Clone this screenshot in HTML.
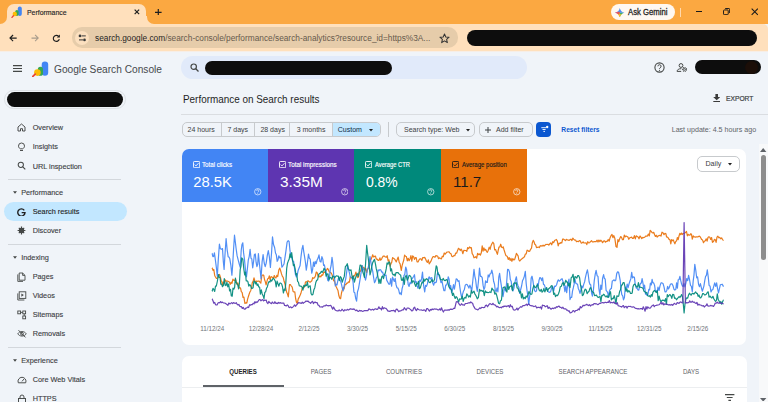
<!DOCTYPE html>
<html><head><meta charset="utf-8">
<style>
*{box-sizing:border-box;margin:0;padding:0}
html,body{width:768px;height:402px;overflow:hidden;background:#F0F4F9;font-family:"Liberation Sans",sans-serif;position:relative}
.a{position:absolute}
.t{white-space:nowrap;line-height:normal}
.blk{background:#0d0d0d}
</style></head><body>
<div class="a" style="left:0;top:0;width:768px;height:24px;background:#FBA841"></div>
<div class="a" style="left:7px;top:3.5px;width:139px;height:21px;background:#FFE0BC;border-radius:7px 7px 0 0"></div>
<div class="a" style="left:0;top:16px;width:8px;height:8px;background:#FFE0BC"></div>
<div class="a" style="left:-2px;top:8px;width:9px;height:16px;background:#FBA841;border-radius:0 0 7px 0"></div>
<div class="a" style="left:146px;top:16px;width:8px;height:8px;background:#FFE0BC"></div>
<div class="a" style="left:146.5px;top:8px;width:9px;height:16px;background:#FBA841;border-radius:0 0 0 7px"></div>
<svg class="a" style="left:11px;top:6px" width="12" height="12" viewBox="0 0 12 12">
<rect x="6.8" y="0.6" width="4" height="9.4" rx="2" fill="#4285F4"/>
<rect x="4.2" y="4" width="3.4" height="6" rx="1.7" fill="#34A853"/>
<circle cx="3.8" cy="8" r="2.2" fill="#FBBC04"/>
<path d="M1 11.4 L2.4 9.8" stroke="#EA4335" stroke-width="1.3" stroke-linecap="round"/>
</svg>
<div class="a t" style="left:26.7px;top:8.01px;font-size:7.6px;color:#262626;transform:scaleX(0.91);transform-origin:0 0;-webkit-text-stroke:0.15px #262626;">Performance</div>
<svg class="a" style="left:134px;top:9.2px" width="5.8" height="5.8" viewBox="0 0 7 7"><path d="M0.8 0.8L6.2 6.2M6.2 0.8L0.8 6.2" stroke="#1f1f1f" stroke-width="1.45"/></svg>
<svg class="a" style="left:155px;top:8.7px" width="6.6" height="6.6" viewBox="0 0 6.6 6.6"><path d="M3.3 0V6.6M0 3.3H6.6" stroke="#1f1f1f" stroke-width="1.2"/></svg>
<div class="a" style="left:611px;top:3.7px;width:64px;height:16.5px;background:#FFF8F1;border-radius:8px"></div>
<svg class="a" style="left:615.3px;top:7.6px" width="9.6" height="9.6" viewBox="0 0 10 10"><clipPath id="gc"><path d="M5 0 Q5.9 4.1 10 5 Q5.9 5.9 5 10 Q4.1 5.9 0 5 Q4.1 4.1 5 0Z"/></clipPath><g clip-path="url(#gc)"><rect x="0" y="0" width="10" height="5" fill="#4C8DF6"/><rect x="0" y="4" width="5" height="6" fill="#EA5A47"/><rect x="5" y="5" width="5" height="5" fill="#3FAE6A"/><rect x="2.5" y="6.5" width="5" height="3.5" fill="#F6C026"/><rect x="0" y="2" width="3" height="4" fill="#D9508B" opacity="0.6"/></g></svg>
<div class="a t" style="left:627.8px;top:7.39px;font-size:8.6px;color:#1f1f1f;transform:scaleX(0.9);transform-origin:0 0;-webkit-text-stroke:0.28px #1f1f1f;">Ask Gemini</div>
<div class="a" style="left:680px;top:7.7px;width:1px;height:9px;background:#FFD9AE"></div>
<div class="a" style="left:695.6px;top:11px;width:6.8px;height:1.1px;background:#1a1a1a"></div>
<svg class="a" style="left:722.8px;top:8.2px" width="7.2" height="7.2" viewBox="0 0 8 8"><rect x="0.6" y="2.2" width="5.2" height="5.2" rx="0.8" fill="none" stroke="#1a1a1a" stroke-width="1.1"/><path d="M2.4 0.6H6.6A0.8 0.8 0 0 1 7.4 1.4V5.6" fill="none" stroke="#1a1a1a" stroke-width="1.1"/></svg>
<svg class="a" style="left:750.5px;top:8.3px" width="7.5" height="7.5" viewBox="0 0 8 8"><path d="M0.7 0.7L7.3 7.3M7.3 0.7L0.7 7.3" stroke="#1a1a1a" stroke-width="1.1"/></svg>
<div class="a" style="left:0;top:23.8px;width:768px;height:28px;background:#FFE0BC;border-radius:0 5px 0 0"></div>
<div class="a" style="left:0;top:51.2px;width:768px;height:1.3px;background:#F7EEE6"></div>
<svg class="a" style="left:9.2px;top:33.8px" width="8.2" height="8.2" viewBox="0 0 10 10"><path d="M9.4 5H1.4M5 1.2L1.2 5L5 8.8" fill="none" stroke="#1f1f1f" stroke-width="1.4"/></svg>
<svg class="a" style="left:30.6px;top:33.8px" width="8.2" height="8.2" viewBox="0 0 10 10"><path d="M0.6 5H8.6M5 1.2L8.8 5L5 8.8" fill="none" stroke="#A89C8C" stroke-width="1.3"/></svg>
<svg class="a" style="left:52.1px;top:34px" width="9" height="9" viewBox="0 0 11 11"><path d="M8.9 6.3A3.7 3.7 0 1 1 8.1 2.9" fill="none" stroke="#1f1f1f" stroke-width="1.4"/><path d="M9.6 0.6V4.3H5.9Z" fill="#1f1f1f"/></svg>
<div class="a" style="left:72.4px;top:27.4px;width:386px;height:20.4px;background:#E6CCAA;border-radius:10px"></div>
<div class="a" style="left:74.8px;top:30.5px;width:14.5px;height:14.5px;border-radius:50%;background:#FCE0BF"></div>
<svg class="a" style="left:78px;top:34px" width="9" height="8" viewBox="0 0 9 8"><circle cx="2" cy="1.9" r="1.35" fill="#3a3a3a"/><path d="M3.6 1.9H7.8M1 5.9H5" stroke="#3a3a3a" stroke-width="1"/><circle cx="6.5" cy="5.9" r="1.35" fill="#3a3a3a"/></svg>
<div class="a t" style="left:94.6px;top:32.18px;font-size:9.7px;color:#1f1f1f;transform:scaleX(0.857);transform-origin:0 0;">search.google.com<span style="color:#665a4d">/search-console/performance/search-analytics?resource_id=ht<span>tps</span>%3A...</span></div>
<svg class="a" style="left:438.5px;top:32.5px" width="11" height="11" viewBox="0 0 12 12"><path d="M6 1L7.4 4.3L11 4.6L8.3 7L9.1 10.5L6 8.6L2.9 10.5L3.7 7L1 4.6L4.6 4.3Z" fill="none" stroke="#333" stroke-width="1.1" stroke-linejoin="round"/></svg>
<div class="a blk" style="left:466.5px;top:30.1px;width:290.5px;height:15.5px;border-radius:8px"></div>
<svg class="a" style="left:13px;top:65px" width="9" height="7" viewBox="0 0 9 7"><path d="M0 0.6H9M0 3.5H9M0 6.4H9" stroke="#444746" stroke-width="1.1"/></svg>
<svg class="a" style="left:32px;top:60.5px" width="17" height="16" viewBox="0 0 17 16">
<rect x="9.7" y="0.6" width="6.5" height="14.2" rx="3.25" fill="#4285F4"/>
<rect x="5.8" y="5.8" width="5.2" height="9" rx="2.6" fill="#34A853"/>
<circle cx="5.4" cy="11.6" r="3.3" fill="#FBBC04"/>
<path d="M0.6 15.6 L3.2 13.2" stroke="#EA4335" stroke-width="1.8" stroke-linecap="round"/>
</svg>
<div class="a t" style="left:53.9px;top:62.14px;font-size:11.7px;color:#474a4d;transform:scaleX(0.87);transform-origin:0 0;">Google Search Console</div>
<div class="a" style="left:181px;top:56.3px;width:346px;height:23px;background:#E1EAFA;border-radius:12px"></div>
<svg class="a" style="left:189.5px;top:63px" width="9" height="9" viewBox="0 0 9 9"><circle cx="3.7" cy="3.7" r="2.7" fill="none" stroke="#444746" stroke-width="1.2"/><path d="M5.8 5.8L8.5 8.5" stroke="#444746" stroke-width="1.3"/></svg>
<div class="a blk" style="left:205px;top:60.5px;width:187px;height:14.5px;border-radius:7px"></div>
<svg class="a" style="left:653.8px;top:61.75px" width="11" height="11" viewBox="0 0 11 11"><circle cx="5.5" cy="5.5" r="4.6" fill="none" stroke="#444746" stroke-width="1.1"/><path d="M3.9 4.3A1.6 1.6 0 1 1 6.1 5.8C5.6 6.1 5.5 6.4 5.5 7" fill="none" stroke="#444746" stroke-width="0.95"/><circle cx="5.5" cy="8.3" r="0.6" fill="#444746"/></svg>
<svg class="a" style="left:676px;top:62px" width="12" height="11" viewBox="0 0 12 11"><circle cx="5" cy="3.5" r="1.9" fill="none" stroke="#444746" stroke-width="1"/><path d="M1.1 9.4C1.1 7.6 2.8 6.6 5.4 6.7M1.1 9.4H5.2" fill="none" stroke="#444746" stroke-width="1"/><circle cx="8.6" cy="7.4" r="1.9" fill="none" stroke="#444746" stroke-width="1.1" stroke-dasharray="1 0.6"/><circle cx="8.6" cy="7.4" r="0.9" fill="none" stroke="#444746" stroke-width="0.8"/></svg>
<div class="a blk" style="left:694.8px;top:59.5px;width:66.2px;height:14.8px;border-radius:7.4px"></div><div class="a" style="left:745px;top:60.5px;width:13px;height:13px;border-radius:50%;background:#1b0e08"></div>
<div class="a" style="left:4.2px;top:90.2px;width:122px;height:18.7px;border-radius:9.4px;border:1px solid #DDE1E6"></div>
<div class="a blk" style="left:6.8px;top:92px;width:116.4px;height:14.8px;border-radius:7.4px"></div>
<div class="a" style="left:7.8px;top:178.9px;width:113.5px;height:1px;background:#D3D7DC"></div>
<svg class="a" style="left:12.6px;top:190.9px" width="4" height="3" viewBox="0 0 4 3"><path d="M0 0.3H4L2 2.7Z" fill="#444746"/></svg>
<div class="a t" style="left:21.2px;top:188.28px;font-size:7.3px;color:#3c4043;-webkit-text-stroke:0.12px #3c4043;">Performance</div>
<div class="a" style="left:7.8px;top:243.8px;width:113.5px;height:1px;background:#D3D7DC"></div>
<svg class="a" style="left:12.6px;top:255.5px" width="4" height="3" viewBox="0 0 4 3"><path d="M0 0.3H4L2 2.7Z" fill="#444746"/></svg>
<div class="a t" style="left:21.2px;top:252.88px;font-size:7.3px;color:#3c4043;-webkit-text-stroke:0.12px #3c4043;">Indexing</div>
<div class="a" style="left:7.8px;top:346.9px;width:113.5px;height:1px;background:#D3D7DC"></div>
<svg class="a" style="left:12.6px;top:358.9px" width="4" height="3" viewBox="0 0 4 3"><path d="M0 0.3H4L2 2.7Z" fill="#444746"/></svg>
<div class="a t" style="left:21.2px;top:356.28px;font-size:7.3px;color:#3c4043;-webkit-text-stroke:0.12px #3c4043;">Experience</div>
<div class="a" style="left:3.8px;top:202px;width:123px;height:19.2px;background:#C2E7FF;border-radius:10px"></div>
<svg class="a" style="left:17px;top:122.9px" width="10" height="10" viewBox="0 0 10 10"><path d="M1 4L4.5 1L8 4V8H5.5V5.7H3.5V8H1Z" fill="none" stroke="#444746" stroke-width="0.95"/></svg>
<div class="a t" style="left:32.7px;top:123.18px;font-size:7.3px;color:#3c4043;-webkit-text-stroke:0.12px #3c4043;">Overview</div>
<svg class="a" style="left:17px;top:141.9px" width="10" height="10" viewBox="0 0 10 10"><path d="M3 8.5H6M3.2 6.8C2 6 1.5 5 1.5 4A3 3 0 0 1 7.5 4C7.5 5 7 6 5.8 6.8Z" fill="none" stroke="#444746" stroke-width="0.95"/></svg>
<div class="a t" style="left:32.7px;top:142.18px;font-size:7.3px;color:#3c4043;-webkit-text-stroke:0.12px #3c4043;">Insights</div>
<svg class="a" style="left:17px;top:161.3px" width="10" height="10" viewBox="0 0 10 10"><circle cx="3.8" cy="3.8" r="2.6" fill="none" stroke="#444746" stroke-width="1.05"/><path d="M5.8 5.8L8.3 8.3" stroke="#444746" stroke-width="1.15"/></svg>
<div class="a t" style="left:32.7px;top:161.58px;font-size:7.3px;color:#3c4043;-webkit-text-stroke:0.12px #3c4043;">URL inspection</div>
<div class="a t" style="left:32.7px;top:207.48px;font-size:7.3px;color:#1f1f1f;-webkit-text-stroke:0.12px #1f1f1f;">Search results</div>
<svg class="a" style="left:17px;top:225.6px" width="10" height="10" viewBox="0 0 10 10"><path d="M4.5 0.6V8.4M0.6 4.5H8.4M1.8 1.8L7.2 7.2M7.2 1.8L1.8 7.2" stroke="#444746" stroke-width="1.2"/><circle cx="4.5" cy="4.5" r="2.7" fill="#444746"/></svg>
<div class="a t" style="left:32.7px;top:225.88px;font-size:7.3px;color:#3c4043;-webkit-text-stroke:0.12px #3c4043;">Discover</div>
<svg class="a" style="left:17px;top:271.9px" width="10" height="10" viewBox="0 0 10 10"><path d="M2.2 1H5.6L8 3.4V8.2H2.2Z M5.6 1V3.4H8 M0.8 2.4V9.4H6" fill="none" stroke="#444746" stroke-width="0.9"/></svg>
<div class="a t" style="left:32.7px;top:272.18px;font-size:7.3px;color:#3c4043;-webkit-text-stroke:0.12px #3c4043;">Pages</div>
<svg class="a" style="left:17px;top:291.0px" width="10" height="10" viewBox="0 0 10 10"><rect x="2.2" y="0.8" width="6.6" height="6.6" fill="none" stroke="#444746" stroke-width="0.9"/><path d="M0.8 2.4V9H7.4" fill="none" stroke="#444746" stroke-width="0.9"/><path d="M4.4 2.5L6.8 4.1L4.4 5.7Z" fill="#444746"/></svg>
<div class="a t" style="left:32.7px;top:291.28px;font-size:7.3px;color:#3c4043;-webkit-text-stroke:0.12px #3c4043;">Videos</div>
<svg class="a" style="left:17px;top:310.1px" width="10" height="10" viewBox="0 0 10 10"><rect x="0.8" y="1" width="2.8" height="2.8" fill="none" stroke="#444746" stroke-width="0.9"/><rect x="5.8" y="1" width="2.8" height="2.8" fill="none" stroke="#444746" stroke-width="0.9"/><rect x="5.8" y="6" width="2.8" height="2.8" fill="none" stroke="#444746" stroke-width="0.9"/><path d="M3.6 2.4H5.8M7.2 3.8V6" stroke="#444746" stroke-width="0.9"/></svg>
<div class="a t" style="left:32.7px;top:310.38px;font-size:7.3px;color:#3c4043;-webkit-text-stroke:0.12px #3c4043;">Sitemaps</div>
<svg class="a" style="left:17px;top:329.2px" width="10" height="10" viewBox="0 0 10 10"><path d="M0.8 4.8C2.5 1.8 7.5 1.8 9.2 4.8C7.5 7.8 2.5 7.8 0.8 4.8Z" fill="none" stroke="#444746" stroke-width="0.9"/><circle cx="5" cy="4.8" r="1.4" fill="none" stroke="#444746" stroke-width="0.9"/><path d="M1.5 1.2L8.5 8.4" stroke="#444746" stroke-width="0.95"/></svg>
<div class="a t" style="left:32.7px;top:329.48px;font-size:7.3px;color:#3c4043;-webkit-text-stroke:0.12px #3c4043;">Removals</div>
<svg class="a" style="left:17px;top:375.0px" width="10" height="10" viewBox="0 0 10 10"><path d="M1.3 7.8A4 4 0 1 1 8.7 7.8Z" fill="none" stroke="#444746" stroke-width="0.95"/><path d="M5 6.4L7 4" stroke="#444746" stroke-width="0.95"/></svg>
<div class="a t" style="left:32.7px;top:375.28px;font-size:7.3px;color:#3c4043;-webkit-text-stroke:0.12px #3c4043;">Core Web Vitals</div>
<svg class="a" style="left:17px;top:394.1px" width="10" height="10" viewBox="0 0 10 10"><rect x="1.5" y="4.5" width="7" height="5" fill="none" stroke="#444746" stroke-width="0.95"/><path d="M3 4.5V3A2 2 0 0 1 7 3V4.5" fill="none" stroke="#444746" stroke-width="0.95"/></svg>
<div class="a t" style="left:32.7px;top:394.38px;font-size:7.3px;color:#3c4043;-webkit-text-stroke:0.12px #3c4043;">HTTPS</div>
<svg class="a" style="left:16.8px;top:207.6px" width="8.8" height="8.8" viewBox="0 0 10 10"><path d="M8.3 2.6A4.1 4.1 0 1 0 9.1 5.3H5.3" fill="none" stroke="#1f1f1f" stroke-width="1.55"/></svg>
<div class="a t" style="left:183.4px;top:93.52px;font-size:10.3px;color:#1f1f1f;transform:scaleX(0.962);transform-origin:0 0;">Performance on Search results</div>
<svg class="a" style="left:713px;top:94.3px" width="7.4" height="8" viewBox="0 0 7.4 8"><path d="M2.4 0H5V3H7.2L3.7 6.2L0.2 3H2.4Z" fill="#3a3a3a"/><rect x="0.3" y="7" width="6.8" height="1" fill="#3a3a3a"/></svg>
<div class="a t" style="left:726.2px;top:94.28px;font-size:7.2px;color:#3c4043;transform:scaleX(0.93);transform-origin:0 0;-webkit-text-stroke:0.2px #3c4043;">EXPORT</div>
<div class="a" style="left:181px;top:113.6px;width:587px;height:1px;background:#DADDE1"></div>
<div class="a" style="left:181.6px;top:122.2px;width:199px;height:15.2px;border:1px solid #C7CACD;border-radius:5px;overflow:hidden"><div class="a" style="left:150px;top:0;width:50px;height:16px;background:#C2E7FF"></div></div>
<div class="a" style="left:221.0px;top:122.6px;width:1px;height:14.5px;background:#C7CACD"></div>
<div class="a" style="left:253.7px;top:122.6px;width:1px;height:14.5px;background:#C7CACD"></div>
<div class="a" style="left:289.0px;top:122.6px;width:1px;height:14.5px;background:#C7CACD"></div>
<div class="a" style="left:332.1px;top:122.6px;width:1px;height:14.5px;background:#C7CACD"></div>
<div class="a t" style="left:187.6px;top:125.76px;font-size:7.0px;color:#3c4043;">24 hours</div>
<div class="a t" style="left:227.5px;top:125.76px;font-size:7.0px;color:#3c4043;">7 days</div>
<div class="a t" style="left:260.4px;top:125.76px;font-size:7.0px;color:#3c4043;">28 days</div>
<div class="a t" style="left:296.7px;top:125.76px;font-size:7.0px;color:#3c4043;">3 months</div>
<div class="a t" style="left:337.8px;top:125.76px;font-size:7.0px;color:#0b2a44;">Custom</div>
<svg class="a" style="left:368.8px;top:129px" width="4" height="2.5" viewBox="0 0 4 2.5"><path d="M0 0H4L2 2.5Z" fill="#1f1f1f"/></svg>
<div class="a" style="left:388.4px;top:122px;width:1px;height:14.8px;background:#C7CACD"></div>
<div class="a" style="left:396.3px;top:122.2px;width:79.2px;height:15.2px;border:1px solid #C7CACD;border-radius:5px"></div>
<div class="a t" style="left:404.0px;top:125.76px;font-size:7.0px;color:#3c4043;">Search type: Web</div>
<svg class="a" style="left:466px;top:129px" width="4" height="2.5" viewBox="0 0 4 2.5"><path d="M0 0H4L2 2.5Z" fill="#1f1f1f"/></svg>
<div class="a" style="left:479.4px;top:122.2px;width:53.6px;height:15.2px;border:1px solid #C7CACD;border-radius:5px"></div>
<svg class="a" style="left:484.8px;top:126.6px" width="6" height="6" viewBox="0 0 6 6"><path d="M3 0V6M0 3H6" stroke="#3c4043" stroke-width="1"/></svg>
<div class="a t" style="left:496.0px;top:125.86px;font-size:7.0px;color:#3c4043;">Add filter</div>
<div class="a" style="left:536.3px;top:121.9px;width:15.2px;height:15.2px;background:#0B57D0;border-radius:4px"></div>
<svg class="a" style="left:539.5px;top:125px" width="9" height="9" viewBox="0 0 9 9"><path d="M1.3 2.7H6.2M2.5 4.5H5.6M3.4 6.4H5" stroke="#fff" stroke-width="0.9"/><circle cx="7.2" cy="2" r="1.2" fill="#fff"/></svg>
<div class="a t" style="left:561.3px;top:126.34px;font-size:6.7px;color:#0B57D0;font-weight:bold;">Reset filters</div>
<div class="a t" style="left:671.7px;top:125.67px;font-size:7.1px;color:#5f6368;">Last update: 4.5 hours ago</div>
<div class="a" style="left:181.6px;top:148.5px;width:564.2px;height:196px;background:#fff;border-radius:7px"></div>
<div class="a" style="left:181.5px;top:148.5px;width:86.3px;height:53.3px;background:#4285F4;border-radius:7px 0 0 0;"></div>
<svg class="a" style="left:192.5px;top:161px" width="7.2" height="7.2" viewBox="0 0 7.2 7.2"><rect x="0.5" y="0.5" width="6.2" height="6.2" rx="0.8" fill="none" stroke="#fff" stroke-width="0.9"/><path d="M1.7 3.6L3 4.9L5.5 2.2" fill="none" stroke="#fff" stroke-width="0.9"/></svg>
<div class="a t" style="left:202.1px;top:161.15px;font-size:6.9px;color:#fff;transform:scaleX(0.9);transform-origin:0 0;-webkit-text-stroke:0.15px #fff;">Total clicks</div>
<div class="a t" style="left:193.2px;top:173.58px;font-size:14.8px;color:#fff;">28.5K</div>
<svg class="a" style="left:254.2px;top:188.4px" width="7.5" height="7.5" viewBox="0 0 8 8"><circle cx="4" cy="4" r="3.4" fill="none" stroke="rgba(255,255,255,0.85)" stroke-width="0.8"/><path d="M2.9 3.1A1.1 1.1 0 1 1 4.4 4C4.1 4.2 4 4.4 4 4.8" fill="none" stroke="rgba(255,255,255,0.85)" stroke-width="0.8"/><circle cx="4" cy="5.9" r="0.45" fill="rgba(255,255,255,0.85)"/></svg>
<div class="a" style="left:267.8px;top:148.5px;width:86.4px;height:53.3px;background:#5E35B1;"></div>
<svg class="a" style="left:278.8px;top:161px" width="7.2" height="7.2" viewBox="0 0 7.2 7.2"><rect x="0.5" y="0.5" width="6.2" height="6.2" rx="0.8" fill="none" stroke="#fff" stroke-width="0.9"/><path d="M1.7 3.6L3 4.9L5.5 2.2" fill="none" stroke="#fff" stroke-width="0.9"/></svg>
<div class="a t" style="left:288.4px;top:161.15px;font-size:6.9px;color:#fff;transform:scaleX(0.915);transform-origin:0 0;-webkit-text-stroke:0.15px #fff;">Total impressions</div>
<div class="a t" style="left:279.5px;top:173.58px;font-size:14.8px;color:#fff;transform:scaleX(1.04);transform-origin:0 0;">3.35M</div>
<svg class="a" style="left:340.6px;top:188.4px" width="7.5" height="7.5" viewBox="0 0 8 8"><circle cx="4" cy="4" r="3.4" fill="none" stroke="rgba(255,255,255,0.85)" stroke-width="0.8"/><path d="M2.9 3.1A1.1 1.1 0 1 1 4.4 4C4.1 4.2 4 4.4 4 4.8" fill="none" stroke="rgba(255,255,255,0.85)" stroke-width="0.8"/><circle cx="4" cy="5.9" r="0.45" fill="rgba(255,255,255,0.85)"/></svg>
<div class="a" style="left:354.2px;top:148.5px;width:86.7px;height:53.3px;background:#00897B;"></div>
<svg class="a" style="left:365.2px;top:161px" width="7.2" height="7.2" viewBox="0 0 7.2 7.2"><rect x="0.5" y="0.5" width="6.2" height="6.2" rx="0.8" fill="none" stroke="#fff" stroke-width="0.9"/><path d="M1.7 3.6L3 4.9L5.5 2.2" fill="none" stroke="#fff" stroke-width="0.9"/></svg>
<div class="a t" style="left:374.8px;top:161.15px;font-size:6.9px;color:#fff;transform:scaleX(0.84);transform-origin:0 0;-webkit-text-stroke:0.15px #fff;">Average CTR</div>
<div class="a t" style="left:365.9px;top:173.58px;font-size:14.8px;color:#fff;transform:scaleX(0.94);transform-origin:0 0;">0.8%</div>
<svg class="a" style="left:427.3px;top:188.4px" width="7.5" height="7.5" viewBox="0 0 8 8"><circle cx="4" cy="4" r="3.4" fill="none" stroke="rgba(255,255,255,0.85)" stroke-width="0.8"/><path d="M2.9 3.1A1.1 1.1 0 1 1 4.4 4C4.1 4.2 4 4.4 4 4.8" fill="none" stroke="rgba(255,255,255,0.85)" stroke-width="0.8"/><circle cx="4" cy="5.9" r="0.45" fill="rgba(255,255,255,0.85)"/></svg>
<div class="a" style="left:440.9px;top:148.5px;width:86.1px;height:53.3px;background:#E8710A;"></div>
<svg class="a" style="left:451.9px;top:161px" width="7.2" height="7.2" viewBox="0 0 7.2 7.2"><rect x="0.5" y="0.5" width="6.2" height="6.2" rx="0.8" fill="none" stroke="#1a1a1a" stroke-width="0.9"/><path d="M1.7 3.6L3 4.9L5.5 2.2" fill="none" stroke="#1a1a1a" stroke-width="0.9"/></svg>
<div class="a t" style="left:461.5px;top:161.15px;font-size:6.9px;color:#1a1a1a;transform:scaleX(0.875);transform-origin:0 0;-webkit-text-stroke:0.15px #1a1a1a;">Average position</div>
<div class="a t" style="left:452.6px;top:173.58px;font-size:14.8px;color:#1a1a1a;transform:scaleX(1.02);transform-origin:0 0;">11.7</div>
<svg class="a" style="left:513.4px;top:188.4px" width="7.5" height="7.5" viewBox="0 0 8 8"><circle cx="4" cy="4" r="3.4" fill="none" stroke="rgba(255,255,255,0.85)" stroke-width="0.8"/><path d="M2.9 3.1A1.1 1.1 0 1 1 4.4 4C4.1 4.2 4 4.4 4 4.8" fill="none" stroke="rgba(255,255,255,0.85)" stroke-width="0.8"/><circle cx="4" cy="5.9" r="0.45" fill="rgba(255,255,255,0.85)"/></svg>
<div class="a" style="left:697.1px;top:156.4px;width:42.6px;height:15.9px;border:1px solid #C7CACD;border-radius:5px"></div>
<div class="a t" style="left:705.5px;top:160.37px;font-size:7.1px;color:#3c4043;">Daily</div>
<svg class="a" style="left:728px;top:163.4px" width="4" height="2.5" viewBox="0 0 4 2.5"><path d="M0 0H4L2 2.5Z" fill="#1f1f1f"/></svg>
<svg class="a" style="left:0;top:0" width="768" height="402" viewBox="0 0 768 402"><g fill="none" stroke-width="1.2" stroke-linejoin="round" stroke-opacity="0.92">
<path d="M212.0 267.9 L212.1 267.9 L213.0 270.4 L213.8 269.5 L214.7 275.4 L215.5 277.0 L216.3 278.3 L217.1 278.4 L217.9 277.3 L218.7 274.9 L219.5 274.4 L220.3 276.8 L221.1 280.2 L221.9 281.8 L222.7 285.4 L223.5 282.0 L224.4 282.9 L225.2 279.8 L226.1 281.1 L226.9 281.1 L227.8 281.2 L228.6 281.5 L229.5 282.2 L230.3 284.3 L231.2 282.2 L232.0 283.3 L232.9 279.2 L233.7 280.3 L234.6 280.6 L235.4 279.2 L236.2 281.7 L237.1 284.3 L237.9 282.9 L238.8 286.4 L239.6 288.0 L240.5 287.9 L241.3 291.7 L242.2 292.6 L243.0 297.3 L243.9 297.2 L244.9 303.4 L246.0 302.7 L246.8 303.1 L247.6 299.2 L248.4 296.5 L249.2 294.0 L249.9 292.0 L250.7 290.7 L251.5 287.8 L252.3 282.7 L253.2 281.1 L254.0 277.8 L254.9 281.0 L255.7 282.1 L256.6 281.0 L257.4 281.3 L258.3 281.1 L259.1 281.0 L259.9 282.2 L260.8 283.2 L261.9 275.5 L262.9 274.9 L263.7 275.2 L264.5 279.5 L265.3 281.6 L266.1 284.8 L266.9 281.6 L267.7 278.7 L268.5 278.4 L269.3 275.9 L270.1 279.8 L271.0 276.7 L271.8 276.8 L272.6 277.6 L273.5 278.0 L274.3 275.5 L275.2 277.4 L276.0 277.9 L276.9 275.3 L277.7 276.6 L278.8 270.1 L279.8 268.1 L280.7 271.0 L281.5 273.9 L282.4 276.4 L283.2 277.4 L284.1 281.3 L284.9 283.7 L285.8 288.1 L286.6 292.1 L287.5 294.0 L288.3 296.9 L289.5 284.7 L290.4 284.6 L291.3 286.0 L292.2 287.2 L293.1 291.5 L293.9 292.0 L294.8 291.8 L295.6 298.5 L296.5 302.3 L297.3 303.3 L298.2 299.1 L299.1 297.4 L300.0 295.6 L300.9 293.3 L301.8 289.9 L302.7 287.2 L303.6 288.0 L304.6 286.5 L305.5 281.9 L306.4 282.0 L307.4 281.1 L308.3 280.9 L309.2 281.8 L310.1 282.2 L311.0 281.5 L311.8 280.8 L312.7 277.6 L313.6 278.3 L314.5 277.8 L315.4 276.0 L316.3 272.0 L317.2 272.8 L318.1 276.1 L319.0 277.0 L319.9 275.9 L320.8 276.9 L321.8 274.8 L322.7 275.3 L323.7 272.2 L324.6 272.4 L325.6 271.5 L326.5 270.2 L327.5 268.4 L328.4 269.7 L329.3 272.0 L330.2 272.3 L331.1 272.9 L332.0 274.5 L332.8 277.6 L333.7 280.8 L334.5 280.7 L335.3 284.3 L336.2 286.8 L337.1 288.7 L338.0 290.6 L338.9 295.8 L339.8 298.3 L340.6 298.7 L341.5 293.0 L342.3 290.1 L343.2 287.4 L344.1 288.9 L345.0 284.3 L345.9 284.7 L346.7 283.2 L347.6 283.1 L348.5 281.8 L349.4 282.2 L350.3 276.8 L351.2 277.8 L352.1 277.5 L353.1 275.9 L354.0 276.2 L355.0 274.9 L355.9 272.1 L356.9 276.3 L357.9 277.6 L358.8 276.1 L359.7 271.3 L360.5 271.3 L361.3 268.1 L362.2 265.9 L363.1 267.6 L364.0 267.5 L364.9 269.9 L365.8 268.6 L366.7 272.7 L367.5 269.4 L368.3 268.3 L369.2 264.9 L370.0 260.6 L370.9 259.7 L371.8 257.6 L372.7 254.8 L373.6 257.0 L374.5 256.4 L375.4 256.0 L376.3 259.2 L377.2 259.1 L378.1 260.4 L379.0 260.3 L379.9 257.9 L380.7 260.2 L381.6 259.1 L382.5 257.1 L383.4 256.0 L384.5 256.1 L385.4 257.0 L386.3 257.3 L387.2 255.7 L388.1 260.8 L388.9 259.8 L390.1 266.2 L390.9 263.7 L391.7 262.4 L392.6 257.6 L393.4 258.2 L394.4 258.9 L395.3 260.1 L396.3 261.9 L397.3 259.3 L398.2 257.1 L399.2 262.5 L400.1 263.9 L401.3 270.5 L402.1 265.7 L402.9 262.9 L403.8 260.0 L404.6 255.2 L405.5 256.2 L406.4 256.6 L407.3 260.9 L408.2 258.3 L409.1 260.7 L410.0 259.0 L410.9 255.6 L411.8 261.2 L412.7 255.9 L413.6 256.7 L414.5 259.4 L415.3 257.7 L416.2 257.7 L417.1 262.0 L418.0 262.0 L419.0 259.9 L419.9 258.8 L420.9 258.9 L421.9 260.3 L422.8 257.5 L423.8 257.7 L424.7 257.4 L425.6 259.1 L426.5 261.3 L427.4 262.3 L428.3 259.9 L429.2 263.8 L430.2 262.4 L431.1 260.9 L432.1 258.3 L433.1 256.5 L434.0 256.7 L435.0 257.3 L435.9 255.6 L436.8 255.8 L437.7 256.2 L438.6 258.7 L439.5 257.8 L440.4 258.5 L441.4 258.9 L442.3 256.2 L443.3 256.7 L444.2 253.0 L445.2 254.2 L446.2 252.9 L447.1 252.0 L448.1 252.0 L449.0 251.7 L450.0 253.3 L450.9 253.6 L451.9 256.4 L452.9 256.6 L453.8 255.6 L454.8 255.7 L455.7 253.0 L456.6 253.2 L457.6 250.4 L458.5 248.3 L459.4 249.1 L460.3 250.5 L461.1 249.1 L461.9 250.3 L462.8 253.7 L463.9 250.3 L465.0 250.5 L465.9 250.5 L466.8 251.3 L467.7 247.5 L468.6 248.7 L469.5 247.0 L470.4 247.8 L471.3 247.6 L472.2 253.7 L473.1 255.0 L474.0 257.8 L474.9 257.4 L475.8 256.7 L476.7 258.2 L477.6 253.3 L478.6 254.7 L479.5 253.9 L480.4 255.0 L481.3 252.8 L482.2 245.8 L483.1 251.2 L483.9 247.9 L484.8 250.3 L485.6 249.3 L486.5 251.3 L487.3 252.3 L488.2 250.4 L489.2 247.1 L490.1 249.4 L491.0 245.7 L492.0 243.5 L492.9 242.2 L493.8 243.6 L494.7 249.8 L495.6 249.5 L496.5 252.1 L497.4 254.3 L498.2 250.4 L499.0 247.0 L499.9 246.8 L500.7 244.2 L501.6 247.2 L502.4 247.7 L503.2 246.8 L504.1 250.0 L504.9 252.6 L505.8 255.4 L506.6 255.9 L507.4 256.7 L508.3 259.5 L509.2 257.6 L510.1 260.4 L511.0 258.4 L511.9 261.3 L512.8 258.6 L513.7 259.9 L514.6 259.6 L515.5 256.8 L516.4 253.4 L517.2 254.6 L518.1 255.9 L518.9 260.0 L519.7 261.0 L520.7 259.9 L521.6 259.0 L522.5 258.5 L523.5 257.3 L524.4 257.0 L525.3 254.1 L526.2 253.9 L527.1 250.2 L528.0 250.6 L528.9 251.5 L529.8 251.1 L530.6 249.3 L531.5 248.1 L532.3 242.9 L533.2 240.4 L534.0 241.7 L534.8 244.3 L535.7 245.0 L536.5 247.6 L537.5 247.3 L538.4 247.1 L539.3 247.6 L540.2 245.9 L541.2 245.7 L542.1 246.2 L543.1 245.1 L544.0 246.2 L545.0 245.2 L545.9 244.4 L546.9 244.5 L547.9 244.3 L548.8 245.1 L549.8 243.8 L550.7 243.0 L551.7 244.8 L552.7 241.7 L553.6 242.7 L554.6 240.6 L555.5 240.1 L556.4 239.5 L557.3 241.1 L558.2 245.8 L559.1 243.2 L560.0 243.5 L560.9 242.5 L561.8 242.9 L562.7 239.0 L563.6 239.2 L564.5 239.8 L565.4 240.7 L566.3 239.3 L567.2 239.9 L568.1 240.0 L569.0 240.5 L570.0 239.6 L570.9 239.2 L571.9 240.6 L572.8 238.1 L573.7 239.2 L574.7 240.1 L575.6 240.0 L576.5 241.7 L577.5 241.3 L578.4 241.7 L579.3 240.6 L580.3 240.9 L581.2 243.1 L582.1 242.9 L583.1 241.9 L584.0 243.0 L584.9 243.0 L585.9 242.8 L586.8 244.6 L587.7 241.7 L588.7 243.0 L589.6 242.7 L590.5 241.6 L591.5 240.7 L592.4 242.0 L593.3 241.8 L594.3 241.7 L595.2 241.6 L596.1 241.6 L597.1 240.2 L598.0 242.0 L598.9 240.0 L599.9 241.6 L600.8 240.2 L601.7 241.1 L602.6 242.7 L603.6 241.1 L604.5 240.8 L605.4 242.2 L606.4 241.3 L607.3 241.3 L608.2 239.5 L609.2 241.2 L610.1 237.7 L611.0 235.7 L612.0 234.5 L612.9 237.7 L613.8 235.6 L614.8 238.2 L616.0 246.6 L617.0 247.4 L617.9 239.5 L618.8 241.7 L619.8 238.4 L620.7 236.5 L621.6 237.6 L622.5 239.7 L623.4 239.6 L624.3 235.0 L625.2 236.9 L626.1 236.0 L627.0 236.5 L627.9 237.1 L628.8 239.3 L629.7 237.9 L630.6 237.5 L631.6 237.1 L632.5 238.4 L633.4 238.4 L634.4 235.6 L635.3 238.8 L636.2 235.8 L637.2 236.4 L638.1 237.0 L639.0 238.8 L640.0 236.0 L640.9 237.1 L641.8 238.6 L642.8 237.4 L643.7 237.6 L644.6 237.3 L645.6 236.2 L646.5 236.1 L647.4 236.1 L648.4 234.0 L649.3 235.9 L650.2 230.3 L651.2 231.4 L652.1 232.6 L652.9 232.9 L653.7 232.3 L654.6 234.7 L655.4 236.5 L656.2 235.2 L657.1 237.1 L658.0 236.0 L659.0 235.6 L660.0 235.3 L661.0 236.1 L662.0 232.2 L663.0 232.7 L664.0 234.6 L665.0 233.4 L665.8 233.5 L666.6 237.0 L667.5 237.2 L668.3 238.0 L669.1 239.4 L670.0 239.7 L670.8 243.8 L671.6 239.7 L672.4 240.7 L673.3 239.9 L674.1 242.0 L674.9 243.8 L675.8 241.4 L676.6 240.8 L677.4 237.5 L678.2 239.6 L679.1 235.7 L679.9 233.3 L680.7 234.7 L681.6 233.1 L682.4 234.5 L683.2 233.5 L684.0 233.3 L684.9 233.0 L685.7 232.3 L686.5 231.5 L687.4 235.8 L688.2 234.3 L689.0 235.2 L689.9 235.1 L690.7 233.7 L691.5 234.3 L692.3 239.1 L693.2 235.8 L694.0 237.0 L694.8 236.9 L695.7 237.1 L696.5 236.8 L697.3 236.8 L698.1 236.9 L699.0 236.1 L699.8 236.3 L700.7 237.8 L701.7 239.6 L702.6 240.1 L703.5 242.7 L704.4 241.2 L705.3 240.7 L706.2 238.8 L707.1 241.1 L708.0 237.5 L708.9 236.8 L709.8 237.2 L710.7 239.5 L711.6 237.6 L712.5 242.3 L713.5 241.6 L714.4 239.4 L715.3 239.8 L716.1 242.4 L717.0 237.2 L717.9 236.2 L718.8 237.8 L719.7 237.4 L720.6 238.8 L721.6 237.8 L722.5 239.6 L723.4 240.4 L723.6 240.4" stroke="#E8710A"/>
<path d="M212.0 253.4 L212.1 253.4 L212.9 256.7 L213.6 256.4 L214.4 252.8 L215.4 260.1 L216.3 267.0 L217.3 276.3 L218.3 259.4 L219.4 244.2 L220.4 248.8 L221.5 249.3 L222.5 248.6 L223.3 261.1 L224.1 269.4 L225.1 252.7 L226.1 238.7 L227.2 250.1 L228.2 256.8 L229.0 257.1 L229.8 258.8 L230.8 264.8 L231.9 275.2 L232.7 264.6 L233.6 248.8 L234.5 235.2 L235.3 241.8 L236.2 249.3 L237.1 255.7 L238.1 259.6 L239.2 263.9 L240.2 267.3 L241.2 250.5 L242.0 244.4 L242.8 242.8 L243.6 252.9 L244.4 258.8 L245.4 269.1 L246.5 276.8 L247.4 268.7 L248.3 260.0 L249.2 256.6 L250.1 249.4 L251.0 258.3 L251.8 258.9 L252.7 267.8 L253.6 261.5 L254.4 254.5 L255.3 254.0 L256.1 262.2 L256.9 266.6 L257.7 264.3 L258.4 253.7 L259.3 262.7 L260.2 270.5 L261.0 278.8 L262.1 261.9 L263.1 254.5 L264.2 263.0 L265.2 266.6 L266.2 263.1 L267.3 255.3 L268.3 250.5 L269.4 257.2 L270.4 267.4 L271.5 253.6 L272.5 236.8 L273.5 244.5 L274.6 247.5 L275.5 253.0 L276.3 254.7 L277.2 261.3 L278.0 259.9 L278.8 255.8 L279.8 257.9 L280.8 257.3 L281.9 267.1 L282.9 265.8 L284.0 264.0 L285.0 257.4 L286.0 250.7 L287.1 242.1 L288.2 240.7 L289.1 241.5 L290.0 250.7 L290.8 256.5 L291.7 256.9 L292.6 261.0 L293.6 261.3 L294.5 268.2 L295.4 274.2 L296.4 277.0 L297.3 274.6 L298.2 270.2 L299.2 267.7 L300.1 265.5 L301.0 256.6 L302.0 249.1 L302.9 245.4 L303.7 251.3 L304.6 256.8 L305.4 262.0 L306.3 270.1 L307.4 262.8 L308.5 254.0 L309.3 258.1 L310.2 259.2 L311.0 266.5 L311.8 273.2 L312.7 268.8 L313.5 262.1 L314.4 266.4 L315.2 261.4 L316.2 263.7 L317.1 260.0 L318.1 258.1 L319.0 254.9 L320.0 261.4 L321.0 262.0 L321.9 256.6 L322.8 259.1 L323.6 265.4 L324.4 264.9 L325.3 269.5 L326.1 271.8 L326.9 275.9 L327.8 280.5 L328.6 281.0 L329.5 277.6 L330.3 269.0 L331.1 265.7 L332.0 257.4 L332.8 263.0 L333.7 274.9 L334.5 277.7 L335.3 286.0 L336.2 284.3 L337.0 284.9 L337.9 280.4 L338.7 277.5 L339.6 279.4 L340.5 280.8 L341.4 283.9 L342.3 288.1 L343.2 290.9 L344.1 286.2 L345.0 282.0 L345.9 278.0 L346.7 271.8 L347.6 265.5 L348.5 269.6 L349.4 272.6 L350.3 277.1 L351.2 277.6 L352.1 278.0 L353.0 281.3 L353.9 292.1 L354.8 292.8 L355.7 298.3 L356.6 301.1 L357.5 291.8 L358.5 288.6 L359.4 283.4 L360.3 277.8 L361.2 271.8 L362.2 265.5 L363.0 269.6 L363.9 268.6 L364.7 276.7 L365.5 280.1 L366.4 276.2 L367.3 269.8 L368.2 267.8 L369.1 262.8 L370.0 256.6 L370.9 262.3 L371.8 267.3 L372.7 271.2 L373.6 277.5 L374.5 282.6 L375.4 281.2 L376.3 277.8 L377.2 276.7 L378.1 269.9 L379.0 270.7 L379.9 269.5 L380.8 270.0 L381.7 272.1 L382.6 272.0 L383.5 275.2 L384.4 274.6 L385.3 275.3 L386.0 275.0 L386.7 280.1 L387.8 282.2 L388.9 284.2 L389.8 284.1 L390.7 278.5 L391.6 286.2 L392.5 277.1 L393.4 279.2 L394.3 281.5 L395.2 278.4 L396.1 284.9 L397.0 287.7 L397.9 288.1 L398.7 289.9 L399.6 293.8 L400.4 293.0 L401.3 294.7 L402.1 288.7 L403.0 285.3 L403.9 275.7 L404.8 274.4 L405.7 267.0 L406.6 269.7 L407.4 277.5 L408.2 284.5 L409.1 286.4 L410.0 282.6 L410.9 283.7 L411.8 278.8 L412.7 278.0 L413.6 276.5 L414.5 274.7 L415.3 282.3 L416.2 281.7 L417.1 285.9 L418.0 288.3 L418.9 283.4 L419.8 280.2 L420.7 281.4 L421.6 278.7 L422.5 272.0 L423.6 285.3 L424.7 291.8 L425.6 285.4 L426.5 286.3 L427.4 283.9 L428.3 278.8 L429.2 276.8 L430.1 279.3 L431.0 277.7 L431.9 277.9 L432.8 283.2 L433.7 285.2 L434.6 282.0 L435.5 282.7 L436.4 282.0 L437.3 273.9 L438.2 272.7 L439.1 276.0 L440.1 278.7 L441.0 282.6 L442.0 281.1 L443.0 286.4 L443.9 290.6 L444.9 290.7 L445.7 285.2 L446.6 285.0 L447.4 282.5 L448.2 276.8 L449.1 279.2 L449.9 288.9 L450.7 285.5 L451.6 292.6 L452.5 289.8 L453.5 284.7 L454.4 289.1 L455.3 284.0 L456.2 278.9 L457.2 279.3 L458.1 281.5 L459.0 280.7 L459.9 287.6 L460.8 293.5 L461.7 297.3 L462.6 294.2 L463.4 291.3 L464.3 289.8 L465.2 285.4 L466.1 284.4 L467.1 284.5 L468.0 286.1 L468.9 288.1 L469.9 285.1 L470.8 287.5 L471.7 291.5 L472.8 280.8 L474.0 269.4 L474.8 276.1 L475.6 279.5 L476.5 287.1 L477.3 291.4 L478.4 281.8 L479.5 268.1 L480.4 276.3 L481.3 276.4 L482.2 277.6 L483.1 285.4 L483.9 289.5 L484.8 287.4 L485.6 280.8 L486.5 282.3 L487.3 282.5 L488.2 274.9 L489.1 276.9 L490.0 273.8 L490.9 273.7 L491.8 270.1 L492.7 273.8 L493.6 281.3 L494.5 284.0 L495.4 291.2 L496.3 291.4 L497.1 288.0 L497.9 291.9 L498.8 277.1 L499.6 273.3 L500.4 279.7 L501.3 285.3 L502.1 292.8 L503.0 296.7 L503.9 290.8 L504.8 288.2 L505.8 291.1 L506.7 281.8 L507.6 269.4 L508.6 269.6 L509.5 272.1 L510.3 279.5 L511.2 281.4 L512.1 289.5 L513.0 290.9 L513.9 288.4 L514.7 283.7 L515.5 279.7 L516.4 276.8 L517.2 283.1 L518.1 285.9 L518.9 287.5 L519.7 293.5 L520.7 289.5 L521.6 286.0 L522.5 280.8 L523.5 278.8 L524.4 276.1 L525.3 271.3 L526.2 283.6 L527.0 290.5 L527.9 295.6 L528.7 304.4 L529.5 297.5 L530.4 291.0 L531.2 277.9 L532.0 276.2 L532.9 280.6 L533.8 287.0 L534.7 290.8 L535.6 291.7 L536.5 290.9 L537.4 283.5 L538.2 286.0 L539.0 280.4 L539.9 277.5 L540.8 278.0 L541.7 280.6 L542.6 277.8 L543.5 284.5 L544.4 284.9 L545.2 287.4 L546.1 289.3 L547.0 289.1 L547.9 291.4 L548.8 292.1 L549.8 292.4 L550.7 291.3 L551.7 287.7 L552.7 286.6 L553.6 291.3 L554.6 286.2 L555.5 286.4 L556.5 285.0 L557.4 281.8 L558.3 279.8 L559.3 281.2 L560.2 280.3 L561.1 279.3 L562.1 278.7 L563.0 281.7 L563.9 285.1 L564.9 291.6 L565.8 285.8 L566.7 292.6 L567.8 283.8 L569.0 279.1 L570.0 299.6 L570.8 297.4 L571.7 297.3 L572.5 291.2 L573.3 287.9 L574.1 284.2 L575.0 279.4 L575.8 283.2 L576.6 283.8 L577.5 284.0 L578.3 288.4 L579.1 290.2 L580.0 293.4 L580.9 289.8 L581.8 285.9 L582.7 288.0 L583.7 284.4 L584.6 281.9 L585.5 277.1 L586.5 272.9 L587.4 269.8 L588.2 274.3 L589.1 281.7 L589.9 284.3 L590.7 284.8 L591.6 293.0 L592.4 296.1 L593.3 291.1 L594.3 280.3 L595.2 274.4 L596.1 270.4 L597.1 275.7 L598.0 276.4 L598.9 288.6 L599.9 294.9 L600.8 285.1 L601.7 289.4 L602.6 278.1 L603.6 274.7 L604.4 278.6 L605.2 279.1 L606.1 290.3 L606.9 291.3 L607.7 292.6 L608.6 297.3 L609.5 290.7 L610.4 289.1 L611.4 288.4 L612.3 280.9 L613.2 280.4 L614.1 279.8 L615.0 280.8 L615.8 280.0 L616.7 273.6 L617.6 271.9 L618.5 272.0 L619.3 275.6 L620.2 280.3 L621.0 289.0 L621.8 294.7 L622.7 295.8 L623.5 299.9 L624.4 297.6 L625.3 287.0 L626.3 288.9 L627.2 284.1 L628.1 287.6 L629.0 284.0 L629.9 281.3 L630.8 278.9 L631.7 272.4 L632.5 277.8 L633.4 276.9 L634.4 277.4 L635.3 284.7 L636.2 287.9 L637.2 288.5 L638.0 290.1 L638.8 290.1 L639.7 285.8 L640.5 283.4 L641.3 283.2 L642.1 278.6 L643.0 283.3 L643.8 288.6 L644.6 285.2 L645.5 294.2 L646.3 294.0 L647.1 295.4 L647.9 294.5 L648.8 289.4 L649.6 289.9 L650.4 283.1 L651.3 284.9 L652.1 279.4 L652.9 282.9 L653.7 282.9 L654.6 285.4 L655.4 291.4 L656.2 290.9 L657.1 292.2 L658.0 287.1 L659.0 290.5 L660.0 285.9 L661.0 282.9 L662.0 282.9 L663.0 283.5 L664.0 286.8 L665.0 291.8 L665.9 291.8 L666.8 290.5 L667.6 286.3 L668.5 289.0 L669.4 287.3 L670.3 284.4 L671.2 283.8 L672.1 283.9 L673.1 286.1 L674.0 289.3 L674.9 290.1 L675.8 289.4 L676.6 282.9 L677.4 288.2 L678.2 279.9 L679.1 279.5 L679.9 276.3 L680.7 280.4 L681.6 284.1 L682.4 285.9 L683.2 286.4 L684.0 283.3 L684.9 286.8 L685.8 283.6 L686.7 278.6 L687.7 280.7 L688.6 275.4 L689.5 279.5 L690.5 285.4 L691.4 286.3 L692.3 291.7 L693.2 280.9 L694.0 274.8 L694.8 264.4 L695.8 270.5 L696.7 277.8 L697.6 277.0 L698.6 284.6 L699.5 286.7 L700.4 283.6 L701.4 287.8 L702.3 291.2 L703.1 288.7 L703.9 286.1 L704.8 280.3 L705.6 276.4 L706.4 275.4 L707.3 269.8 L708.2 276.6 L709.1 285.4 L710.1 286.3 L711.0 292.0 L711.9 290.1 L712.9 289.4 L713.8 286.2 L714.7 282.8 L715.7 286.3 L716.6 282.9 L717.5 288.3 L718.5 292.8 L719.4 288.8 L720.3 284.9 L721.3 284.5 L722.2 284.2 L723.4 286.4 L723.6 286.4" stroke="#4285F4"/>
<path d="M212.0 291.2 L212.1 291.2 L213.0 288.4 L213.8 289.4 L214.7 291.5 L215.5 286.1 L216.3 286.2 L217.4 281.0 L218.5 274.5 L219.3 277.4 L220.1 277.7 L220.8 284.1 L221.6 284.0 L222.5 286.7 L223.4 285.5 L224.3 278.7 L225.2 285.3 L226.0 285.6 L226.9 282.2 L227.8 286.9 L228.7 284.0 L229.6 291.0 L230.5 289.3 L231.3 296.0 L232.2 296.1 L233.0 288.1 L233.8 289.2 L234.6 287.6 L235.4 278.1 L236.2 282.6 L237.0 283.7 L237.8 285.2 L238.6 288.8 L239.4 283.5 L240.2 269.6 L241.0 266.2 L241.7 257.8 L242.8 259.1 L243.9 269.6 L244.7 274.9 L245.4 272.0 L246.2 280.8 L247.0 280.8 L247.9 281.6 L248.8 286.1 L249.7 284.6 L250.6 285.7 L251.4 288.4 L252.3 288.3 L253.1 287.7 L253.9 281.4 L254.7 281.1 L255.5 283.9 L256.3 282.3 L257.1 285.4 L257.9 284.1 L258.7 287.0 L259.6 287.0 L260.4 294.1 L261.3 289.8 L262.2 293.9 L263.1 295.7 L264.0 298.8 L264.8 292.4 L265.7 291.7 L266.5 288.3 L267.4 286.7 L268.2 283.3 L269.1 281.5 L270.0 282.0 L270.8 279.8 L271.7 281.1 L272.6 279.2 L273.5 278.1 L274.4 279.5 L275.3 281.2 L276.2 286.9 L277.1 281.1 L278.0 283.8 L278.9 286.2 L279.8 283.1 L280.7 283.1 L281.6 283.9 L282.5 286.8 L283.4 293.0 L284.3 289.1 L285.1 290.4 L285.9 281.6 L286.7 268.3 L287.5 263.2 L288.3 261.1 L289.2 259.0 L290.0 253.8 L290.9 257.7 L291.7 252.7 L292.6 260.1 L293.4 265.7 L294.2 264.4 L295.1 268.7 L295.9 274.7 L296.7 273.6 L297.6 281.4 L298.4 282.1 L299.3 285.8 L300.2 286.1 L301.1 286.2 L302.0 287.1 L302.9 290.1 L303.8 285.4 L304.7 286.6 L305.6 284.9 L306.5 285.6 L307.4 282.0 L308.3 287.6 L309.2 286.2 L310.2 285.8 L311.1 293.6 L312.0 295.0 L313.0 294.2 L313.9 289.7 L314.8 287.7 L315.8 282.5 L316.7 280.3 L317.6 279.9 L318.6 274.6 L319.5 273.5 L320.4 273.1 L321.4 271.3 L322.3 272.3 L323.2 270.9 L324.1 268.3 L325.1 270.2 L326.1 276.2 L327.0 274.0 L328.0 273.9 L328.9 279.8 L329.9 277.3 L330.9 277.7 L331.8 279.3 L332.7 276.0 L333.7 276.3 L334.6 277.9 L335.5 276.6 L336.5 275.8 L337.4 276.2 L338.4 276.2 L339.3 280.7 L340.3 276.6 L341.2 277.7 L342.2 282.2 L343.2 279.3 L344.3 276.4 L345.4 266.5 L346.3 265.8 L347.3 263.7 L348.2 268.7 L349.1 269.7 L350.1 270.4 L351.0 269.8 L351.8 274.8 L352.7 279.0 L353.5 276.2 L354.4 282.2 L355.3 278.9 L356.3 275.3 L357.2 273.5 L358.2 276.5 L359.1 271.7 L360.1 265.0 L361.1 265.3 L361.9 268.4 L362.7 271.5 L363.6 274.4 L364.4 277.4 L365.5 264.7 L366.7 245.4 L367.5 252.6 L368.3 258.7 L369.2 265.9 L370.0 274.9 L370.9 271.7 L371.8 266.4 L372.7 262.6 L373.6 260.9 L374.5 259.4 L375.4 263.7 L376.3 268.9 L377.2 272.6 L378.1 277.8 L379.0 283.4 L379.9 279.2 L380.8 283.5 L381.7 277.0 L382.6 276.0 L383.5 278.6 L384.4 274.8 L385.3 273.1 L386.2 268.9 L387.1 262.9 L388.0 264.2 L388.9 261.9 L389.8 262.5 L390.6 271.0 L391.5 268.8 L392.3 273.5 L393.2 275.0 L394.2 274.2 L395.1 276.0 L396.0 272.6 L397.0 272.7 L397.9 272.5 L398.8 273.6 L399.7 274.4 L400.6 274.9 L401.5 280.1 L402.4 280.3 L403.3 277.5 L404.3 284.5 L405.2 277.0 L406.2 275.3 L407.2 280.2 L408.1 278.7 L409.1 275.4 L410.0 275.7 L411.0 277.0 L412.0 283.0 L412.9 280.8 L413.9 281.3 L414.8 284.1 L415.8 286.5 L416.7 283.3 L417.6 283.9 L418.5 281.3 L419.4 288.7 L420.3 287.9 L421.2 284.9 L422.1 282.0 L423.0 282.9 L423.8 278.9 L424.7 281.2 L425.6 279.4 L426.5 278.7 L427.4 279.5 L428.3 280.1 L429.2 282.4 L430.1 282.6 L431.0 281.5 L431.9 279.4 L432.8 281.7 L433.7 280.8 L434.5 279.7 L435.4 271.8 L436.2 265.8 L437.0 267.1 L437.9 274.3 L438.7 274.3 L439.6 275.5 L440.4 279.5 L441.4 279.7 L442.3 280.2 L443.3 278.4 L444.2 280.2 L445.2 280.7 L446.2 279.7 L447.1 279.9 L448.0 282.9 L448.9 286.8 L449.8 287.8 L450.7 288.9 L451.6 290.3 L452.5 295.5 L453.4 293.2 L454.3 296.3 L455.2 298.5 L456.1 296.6 L457.0 297.5 L457.9 299.9 L458.7 301.9 L459.6 298.9 L460.5 299.2 L461.4 299.0 L462.3 296.0 L463.2 301.4 L464.1 298.4 L465.0 297.3 L465.9 298.1 L466.8 293.9 L467.7 295.1 L468.6 297.1 L469.5 295.8 L470.4 297.0 L471.3 290.5 L472.2 293.2 L473.1 292.1 L474.0 291.2 L474.8 293.8 L475.6 295.0 L476.5 296.8 L477.3 298.8 L478.4 297.3 L479.5 289.3 L480.4 290.9 L481.4 290.4 L482.4 291.4 L483.3 290.5 L484.3 295.7 L485.2 290.9 L486.2 292.4 L487.1 292.2 L488.1 292.7 L489.1 292.3 L490.0 291.9 L491.0 292.5 L491.9 288.1 L492.9 289.9 L493.9 290.1 L494.8 294.2 L495.8 292.8 L496.7 295.3 L497.7 299.4 L498.6 303.3 L499.6 303.8 L500.5 300.7 L501.4 300.3 L502.3 291.7 L503.2 287.4 L504.1 287.3 L505.0 286.9 L505.9 289.5 L506.9 292.1 L507.8 283.4 L508.7 289.5 L509.7 286.8 L510.6 286.3 L511.5 285.5 L512.5 290.6 L513.4 284.1 L514.3 282.8 L515.3 283.3 L516.2 282.7 L517.1 287.9 L518.0 288.3 L518.8 290.9 L519.7 292.5 L520.6 291.7 L521.5 297.9 L522.4 293.8 L523.3 299.0 L524.2 297.4 L525.2 298.7 L526.1 296.0 L527.1 297.0 L528.1 294.7 L529.0 291.4 L530.0 293.5 L530.9 294.4 L531.9 294.0 L532.8 288.9 L533.8 285.4 L534.8 287.2 L535.7 287.6 L536.7 285.8 L537.6 284.7 L538.5 288.2 L539.4 290.4 L540.3 291.2 L541.2 289.3 L542.1 292.2 L543.0 291.2 L543.9 288.4 L544.8 291.9 L545.7 289.7 L546.6 287.5 L547.5 291.4 L548.4 289.0 L549.3 288.2 L550.2 287.5 L551.1 286.1 L552.0 285.6 L552.9 289.0 L553.7 294.5 L554.6 293.1 L555.5 296.6 L556.5 295.2 L557.5 295.6 L558.4 294.0 L559.4 291.1 L560.3 286.7 L561.3 286.4 L562.2 283.7 L563.1 282.5 L564.0 285.5 L564.9 283.0 L565.8 280.2 L566.7 282.1 L567.5 282.2 L568.4 285.9 L569.2 283.2 L570.0 287.6 L571.2 277.8 L572.1 277.0 L573.1 274.3 L574.0 282.2 L575.0 276.6 L575.9 277.1 L576.8 278.1 L577.8 275.5 L578.7 275.7 L579.6 277.7 L580.6 285.7 L581.5 289.4 L582.4 295.6 L583.4 294.7 L584.3 291.3 L585.2 289.1 L586.2 290.0 L587.1 293.7 L588.0 292.2 L589.0 291.3 L589.9 288.3 L590.8 287.6 L591.8 290.9 L592.7 292.2 L593.6 292.3 L594.6 295.6 L595.5 295.4 L596.4 295.1 L597.4 296.8 L598.3 297.5 L599.1 297.0 L600.0 296.4 L600.9 301.6 L601.8 295.3 L602.7 295.6 L603.6 294.2 L604.5 294.9 L605.3 296.5 L606.2 297.0 L607.1 295.7 L607.9 297.4 L608.8 296.7 L609.7 293.1 L610.5 291.7 L611.4 300.0 L612.3 298.4 L613.2 298.7 L614.2 295.6 L615.1 299.0 L616.0 303.8 L616.9 295.9 L617.8 296.3 L618.7 296.1 L619.6 291.6 L620.5 289.8 L621.4 285.3 L622.2 284.9 L623.2 282.6 L624.1 282.7 L625.0 287.0 L626.0 291.4 L626.9 288.8 L627.8 292.1 L628.8 290.7 L629.7 291.5 L630.5 293.5 L631.4 293.5 L632.2 292.9 L633.0 286.7 L633.8 284.7 L634.7 284.1 L635.6 285.2 L636.5 286.9 L637.5 287.2 L638.4 282.7 L639.3 287.2 L640.3 287.1 L641.2 287.5 L642.1 287.6 L643.1 288.6 L644.0 291.2 L644.9 291.7 L645.9 293.2 L646.8 292.3 L647.7 295.8 L648.7 296.2 L649.6 295.7 L650.4 297.1 L651.3 294.6 L652.1 296.3 L652.9 292.3 L653.7 291.2 L654.6 290.3 L655.5 291.8 L656.4 292.5 L657.3 290.5 L658.2 300.7 L659.1 296.1 L660.0 299.8 L661.0 301.8 L662.0 300.4 L662.9 300.2 L663.8 300.3 L664.7 301.1 L665.6 298.6 L666.4 304.5 L667.3 294.6 L668.2 296.6 L669.1 295.2 L670.0 294.6 L670.9 295.8 L671.8 298.4 L672.7 294.4 L673.7 294.5 L674.6 298.3 L675.5 298.0 L676.5 299.8 L677.4 298.5 L678.2 297.7 L679.1 296.5 L679.9 297.5 L680.7 296.4 L681.6 294.5 L682.4 296.4 L683.3 304.0 L684.1 313.0 L685.0 303.9 L685.9 299.1 L686.8 297.9 L687.7 298.1 L688.6 294.9 L689.5 293.2 L690.3 294.4 L691.2 295.2 L692.1 293.4 L693.0 293.3 L693.9 294.2 L694.8 292.9 L695.7 292.0 L696.5 293.4 L697.3 293.4 L698.1 296.3 L699.0 295.0 L699.8 297.4 L700.7 297.9 L701.7 296.4 L702.6 293.7 L703.5 293.5 L704.5 294.8 L705.4 294.8 L706.3 294.3 L707.3 292.5 L708.2 291.8 L709.1 297.1 L710.1 296.1 L711.0 297.4 L711.9 298.0 L712.9 296.3 L713.8 298.7 L714.7 300.3 L715.6 301.3 L716.5 300.2 L717.3 293.8 L718.2 299.5 L719.1 301.0 L720.0 303.1 L720.8 301.5 L721.7 304.2 L722.6 301.7 L723.4 300.1 L723.6 300.1" stroke="#00897B"/>
<path d="M212.0 298.9 L212.1 298.9 L213.0 300.8 L213.8 303.2 L214.7 302.4 L215.5 304.6 L216.3 305.0 L217.2 304.8 L218.0 303.0 L218.9 302.5 L219.7 302.8 L220.6 301.6 L221.5 302.7 L222.4 302.1 L223.3 302.9 L224.2 303.0 L225.1 303.2 L226.0 303.8 L226.9 304.4 L227.9 305.4 L228.8 303.0 L229.8 303.9 L230.7 303.4 L231.6 302.6 L232.6 303.5 L233.5 302.6 L234.5 303.1 L235.4 303.4 L236.3 302.7 L237.1 304.3 L238.0 305.0 L238.9 304.4 L239.7 306.3 L240.6 306.7 L241.5 306.7 L242.3 308.5 L243.2 307.4 L244.1 309.0 L244.9 309.3 L245.8 308.1 L246.8 307.9 L247.7 307.0 L248.6 307.5 L249.6 304.7 L250.5 305.2 L251.4 304.5 L252.3 304.6 L253.2 303.2 L254.1 303.9 L254.9 301.6 L255.8 302.8 L256.7 301.9 L257.5 302.1 L258.4 300.7 L259.3 299.5 L260.1 299.6 L261.0 300.8 L261.9 299.9 L262.7 299.7 L263.6 300.9 L264.4 300.1 L265.3 300.3 L266.2 300.0 L267.0 302.6 L267.9 303.5 L268.8 301.4 L269.6 302.6 L270.5 303.1 L271.4 303.7 L272.3 302.0 L273.1 303.0 L274.0 303.4 L274.9 301.7 L275.8 303.3 L276.7 303.1 L277.5 303.6 L278.4 302.5 L279.3 303.2 L280.2 302.6 L281.1 303.2 L282.0 303.0 L282.8 303.2 L283.7 303.0 L284.6 305.5 L285.5 305.6 L286.4 305.9 L287.3 304.9 L288.2 305.7 L289.1 307.6 L289.9 307.3 L290.8 306.9 L291.7 307.8 L292.7 307.2 L293.6 306.3 L294.6 304.9 L295.5 306.3 L296.5 305.0 L297.5 303.8 L298.4 302.7 L299.4 302.8 L300.3 302.9 L301.3 303.5 L302.3 302.2 L303.2 303.3 L304.2 302.4 L305.1 301.9 L306.0 301.0 L307.0 301.4 L307.9 301.0 L308.8 302.0 L309.7 302.4 L310.6 303.4 L311.5 302.1 L312.5 301.3 L313.4 303.6 L314.3 302.3 L315.2 302.1 L316.1 302.7 L317.1 302.5 L318.0 305.0 L318.9 305.4 L319.9 306.8 L320.8 307.0 L321.7 306.9 L322.6 307.2 L323.5 306.0 L324.4 305.7 L325.3 306.0 L326.2 304.8 L327.1 305.7 L328.0 305.5 L328.8 305.9 L329.7 305.5 L330.7 305.3 L331.7 307.1 L332.6 309.2 L333.6 307.0 L334.5 308.9 L335.5 310.3 L336.5 310.6 L337.4 310.8 L338.3 310.9 L339.2 309.9 L340.1 310.8 L341.1 310.7 L342.0 309.2 L342.9 310.2 L343.8 311.1 L344.7 309.7 L345.7 310.2 L346.6 310.2 L347.5 309.3 L348.4 310.1 L349.4 309.5 L350.3 308.7 L351.2 309.2 L352.1 309.2 L353.0 309.4 L354.0 308.9 L354.9 309.8 L355.8 310.7 L356.8 310.0 L357.7 311.2 L358.6 311.4 L359.6 310.3 L360.5 311.0 L361.4 310.6 L362.4 311.4 L363.3 311.1 L364.2 310.7 L365.2 310.7 L366.1 310.5 L367.0 310.7 L368.0 310.6 L368.9 308.8 L369.8 309.2 L370.8 309.9 L371.7 309.8 L372.6 309.3 L373.6 310.1 L374.5 309.3 L375.4 308.8 L376.2 309.1 L377.1 309.5 L378.0 308.8 L378.9 306.8 L379.7 308.4 L380.6 308.3 L381.5 309.9 L382.4 306.7 L383.2 308.9 L384.1 307.8 L385.0 308.1 L386.0 308.4 L387.0 309.6 L388.0 311.1 L388.9 311.2 L389.8 311.4 L390.7 310.9 L391.6 310.7 L392.5 310.7 L393.4 310.4 L394.3 310.6 L395.2 311.9 L396.1 309.4 L397.0 309.0 L397.9 310.4 L398.8 311.5 L399.7 310.9 L400.6 310.9 L401.5 310.5 L402.4 309.8 L403.3 309.9 L404.3 307.7 L405.2 309.0 L406.2 310.0 L407.2 308.0 L408.1 308.0 L409.1 308.4 L410.0 309.1 L410.9 309.8 L411.9 311.0 L412.8 310.5 L413.7 308.0 L414.7 307.2 L415.6 309.7 L416.5 310.5 L417.5 308.6 L418.4 309.5 L419.3 309.8 L420.3 310.0 L421.2 309.9 L422.1 310.2 L423.0 310.5 L424.0 309.8 L424.9 310.3 L425.8 311.3 L426.7 308.7 L427.6 308.5 L428.6 310.0 L429.5 311.1 L430.4 309.5 L431.3 310.1 L432.2 309.0 L433.2 309.7 L434.1 308.8 L435.0 309.2 L435.9 309.1 L436.9 309.2 L437.8 309.9 L438.7 310.0 L439.7 308.8 L440.6 310.2 L441.5 307.8 L442.5 310.5 L443.4 312.0 L444.3 310.2 L445.2 310.2 L446.2 310.0 L447.1 310.3 L448.1 309.7 L449.0 310.3 L450.0 309.4 L450.9 309.1 L451.9 309.4 L452.9 309.1 L453.8 308.3 L454.7 308.5 L455.5 305.2 L456.3 301.9 L457.2 301.5 L458.0 302.2 L458.9 303.6 L459.7 305.0 L460.5 305.3 L461.5 303.7 L462.5 304.9 L463.4 304.9 L464.4 305.3 L465.3 303.5 L466.3 303.5 L467.2 303.5 L468.1 303.0 L469.0 302.7 L469.9 303.0 L470.8 301.9 L471.7 302.8 L472.6 303.3 L473.4 305.7 L474.2 307.1 L475.1 308.7 L476.0 309.1 L477.0 309.4 L477.9 309.9 L478.9 308.9 L479.8 307.8 L480.8 308.5 L481.7 307.3 L482.7 307.5 L483.6 307.6 L484.6 307.4 L485.5 305.5 L486.5 305.1 L487.5 306.8 L488.4 305.4 L489.3 304.1 L490.2 303.6 L491.1 304.3 L492.0 304.6 L492.9 303.3 L493.9 304.6 L494.8 304.8 L495.8 305.7 L496.7 306.9 L497.7 306.3 L498.6 307.3 L499.6 307.7 L500.5 307.3 L501.4 307.8 L502.3 306.5 L503.2 307.0 L504.1 306.0 L505.0 306.4 L505.9 305.9 L506.8 306.7 L507.7 305.8 L508.6 305.6 L509.5 307.3 L510.4 304.7 L511.4 306.7 L512.3 306.3 L513.2 309.3 L514.1 310.2 L515.1 310.0 L516.0 309.5 L516.9 308.1 L517.9 310.0 L518.8 308.4 L519.7 307.7 L520.7 306.7 L521.7 307.2 L522.6 305.9 L523.6 305.5 L524.5 305.6 L525.5 305.0 L526.5 304.1 L527.3 305.5 L528.2 304.0 L529.1 304.1 L530.0 305.5 L530.9 305.6 L531.9 305.9 L532.8 305.9 L533.8 306.6 L534.8 306.3 L535.7 305.9 L536.7 307.9 L537.6 307.4 L538.6 307.3 L539.6 307.7 L540.5 306.9 L541.5 309.1 L542.4 305.1 L543.4 305.5 L544.4 305.6 L545.3 306.8 L546.3 306.3 L547.2 305.7 L548.2 308.5 L549.1 307.2 L550.1 308.3 L551.1 309.2 L552.0 308.4 L552.9 308.2 L553.7 308.6 L554.6 307.8 L555.5 308.1 L556.4 306.7 L557.3 307.2 L558.2 306.4 L559.1 306.2 L560.0 307.3 L561.0 307.4 L561.9 308.3 L562.9 307.2 L563.8 308.6 L564.8 308.9 L565.8 308.8 L566.7 310.2 L567.5 310.1 L568.4 311.1 L569.2 310.8 L570.0 312.9 L570.9 312.6 L571.9 312.2 L572.8 310.8 L573.7 310.7 L574.7 312.0 L575.6 310.5 L576.5 310.5 L577.5 310.1 L578.4 308.9 L579.3 309.9 L580.3 306.5 L581.2 307.8 L582.1 306.9 L583.1 305.2 L584.0 305.9 L584.9 305.2 L585.8 305.0 L586.7 304.3 L587.6 305.1 L588.5 305.6 L589.4 304.7 L590.4 306.0 L591.3 305.0 L592.2 304.7 L593.1 304.9 L594.0 303.7 L594.9 303.6 L595.8 303.9 L596.7 303.9 L597.6 304.6 L598.5 304.4 L599.4 303.4 L600.3 303.4 L601.2 302.8 L602.1 302.7 L603.0 302.5 L603.9 303.1 L604.8 302.4 L605.7 302.4 L606.6 302.7 L607.5 302.2 L608.4 302.4 L609.3 300.5 L610.3 303.0 L611.2 302.3 L612.1 302.7 L613.0 302.8 L613.9 301.8 L614.8 303.4 L615.6 303.3 L616.4 304.0 L617.3 302.7 L618.1 305.6 L618.9 306.0 L619.8 306.2 L620.7 306.5 L621.6 307.1 L622.5 306.1 L623.4 305.6 L624.3 307.7 L625.2 306.7 L626.1 306.3 L627.0 308.1 L627.9 306.5 L628.8 306.3 L629.7 306.5 L630.6 306.4 L631.5 307.0 L632.4 307.2 L633.3 306.8 L634.2 307.3 L635.1 308.1 L636.0 308.3 L636.9 308.7 L637.8 308.9 L638.7 308.7 L639.7 309.0 L640.6 308.6 L641.5 308.5 L642.4 309.3 L643.3 306.8 L644.2 308.7 L645.1 311.2 L646.0 306.5 L646.9 309.1 L647.8 306.8 L648.7 307.9 L649.6 308.2 L650.5 308.0 L651.5 306.3 L652.4 305.6 L653.3 304.9 L654.3 306.7 L655.2 305.5 L656.1 305.4 L657.1 305.2 L658.0 305.0 L659.0 304.7 L660.0 303.9 L661.0 302.3 L662.0 304.3 L662.9 302.7 L663.8 305.0 L664.7 303.8 L665.6 304.2 L666.4 304.1 L667.3 304.4 L668.2 304.8 L669.1 304.8 L670.0 304.7 L670.9 305.2 L671.8 304.3 L672.7 305.4 L673.6 304.1 L674.5 303.3 L675.4 304.2 L676.3 304.3 L677.2 302.6 L678.1 302.9 L679.0 303.4 L679.9 302.2 L680.9 301.9 L681.9 302.7 L682.9 303.0 L684.1 222.5 L685.4 303.0 L686.2 302.6 L687.1 302.8 L688.0 302.7 L688.9 302.4 L689.7 300.8 L690.6 302.1 L691.5 302.1 L692.3 301.1 L693.3 302.3 L694.2 302.0 L695.1 302.9 L696.1 303.6 L697.0 302.4 L697.9 305.2 L698.9 304.2 L699.8 305.0 L700.7 305.0 L701.6 305.6 L702.5 305.8 L703.4 305.6 L704.3 307.0 L705.2 306.1 L706.1 305.6 L707.0 303.9 L707.9 305.9 L708.8 306.1 L709.8 306.0 L710.7 305.4 L711.6 305.8 L712.5 305.8 L713.5 306.4 L714.4 305.0 L715.3 303.0 L716.3 303.2 L717.2 302.1 L718.1 303.2 L719.0 303.2 L719.9 302.6 L720.8 303.2 L721.7 303.3 L722.5 303.3 L723.4 303.8 L723.6 303.8" stroke="#5E35B1"/>
</g></svg>
<div class="a t" style="left:172.3px;width:80px;text-align:center;top:324.80px;font-size:6.3px;color:#70757a">11/12/24</div>
<div class="a t" style="left:220.9px;width:80px;text-align:center;top:324.80px;font-size:6.3px;color:#70757a">12/28/24</div>
<div class="a t" style="left:269.0px;width:80px;text-align:center;top:324.80px;font-size:6.3px;color:#70757a">2/12/25</div>
<div class="a t" style="left:317.6px;width:80px;text-align:center;top:324.80px;font-size:6.3px;color:#70757a">3/30/25</div>
<div class="a t" style="left:366.2px;width:80px;text-align:center;top:324.80px;font-size:6.3px;color:#70757a">5/15/25</div>
<div class="a t" style="left:414.8px;width:80px;text-align:center;top:324.80px;font-size:6.3px;color:#70757a">6/30/25</div>
<div class="a t" style="left:463.4px;width:80px;text-align:center;top:324.80px;font-size:6.3px;color:#70757a">8/15/25</div>
<div class="a t" style="left:512.0px;width:80px;text-align:center;top:324.80px;font-size:6.3px;color:#70757a">9/30/25</div>
<div class="a t" style="left:560.6px;width:80px;text-align:center;top:324.80px;font-size:6.3px;color:#70757a">11/15/25</div>
<div class="a t" style="left:609.2px;width:80px;text-align:center;top:324.80px;font-size:6.3px;color:#70757a">12/31/25</div>
<div class="a t" style="left:657.8px;width:80px;text-align:center;top:324.80px;font-size:6.3px;color:#70757a">2/15/26</div>
<div class="a" style="left:181.5px;top:356.1px;width:565px;height:60px;background:#fff;border-radius:7px"></div>
<div class="a t" style="left:183.3px;width:120px;text-align:center;top:368.33px;font-size:6.6px;color:#1f1f1f;font-weight:bold;transform:scaleX(0.93)">QUERIES</div>
<div class="a t" style="left:261.4px;width:120px;text-align:center;top:368.33px;font-size:6.6px;color:#5f6368;transform:scaleX(0.93)">PAGES</div>
<div class="a t" style="left:344.1px;width:120px;text-align:center;top:368.33px;font-size:6.6px;color:#5f6368;transform:scaleX(0.93)">COUNTRIES</div>
<div class="a t" style="left:429.8px;width:120px;text-align:center;top:368.33px;font-size:6.6px;color:#5f6368;transform:scaleX(0.93)">DEVICES</div>
<div class="a t" style="left:532.8px;width:120px;text-align:center;top:368.33px;font-size:6.6px;color:#5f6368;transform:scaleX(0.93)">SEARCH APPEARANCE</div>
<div class="a t" style="left:630.5px;width:120px;text-align:center;top:368.33px;font-size:6.6px;color:#5f6368;transform:scaleX(0.93)">DAYS</div>
<div class="a" style="left:181.5px;top:386.7px;width:565px;height:1px;background:#ECEEF0"></div>
<div class="a" style="left:202.7px;top:385.3px;width:81.2px;height:1.6px;background:#5f6368"></div>
<svg class="a" style="left:725.3px;top:394px" width="9.4" height="7" viewBox="0 0 9.4 7"><path d="M0 0.6H9.4M1.8 3.5H7.6M3.4 6.4H6" stroke="#444746" stroke-width="1.1"/></svg>
<div class="a" style="left:758.6px;top:144px;width:9.4px;height:258px;background:#F8F9FA"></div>
<svg class="a" style="left:760.4px;top:147.5px" width="6.4" height="4" viewBox="0 0 6.4 4"><path d="M0 4H6.4L3.2 0Z" fill="#5f6368"/></svg>
<div class="a" style="left:761px;top:154.5px;width:5px;height:105.5px;background:#8d8d8d;border-radius:2.5px"></div>
<svg class="a" style="left:760.4px;top:397.8px" width="6.4" height="3.6" viewBox="0 0 6.4 3.6"><path d="M0 0H6.4L3.2 3.6Z" fill="#5f6368"/></svg>
</body></html>
